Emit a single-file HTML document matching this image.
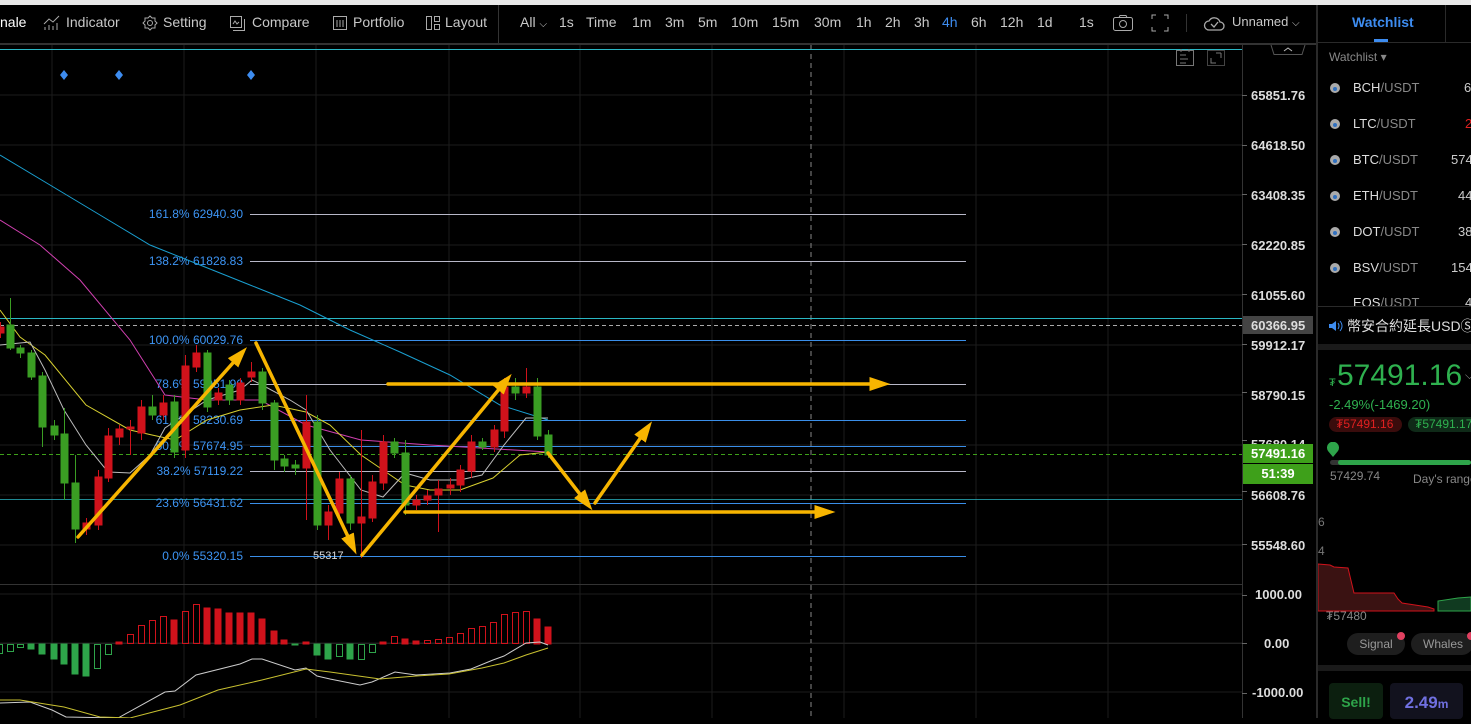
<!DOCTYPE html>
<html><head><meta charset="utf-8">
<style>
*{margin:0;padding:0;box-sizing:border-box}
body{width:1471px;height:718px;background:#000;overflow:hidden;position:relative;font-family:"Liberation Sans","Noto Sans CJK TC",sans-serif;color:#ccc}
.abs{position:absolute;white-space:nowrap}
.tb{top:14px;font-size:14px;color:#c8c8c8}
.wl{font-size:13px;color:#ddd;left:1353px}
.wl span{color:#888}
.pa{left:1251px;font-size:13px;font-weight:bold;color:#ddd}
</style></head><body>
<div class="abs" style="left:0;top:0;width:1471px;height:5px;background:#e8e8e8"></div>
<div class="abs" style="left:0;top:43px;width:1316px;height:2px;background:#333"></div>
<div class="abs" style="left:498px;top:5px;width:1px;height:38px;background:#333"></div>
<div class="abs" style="left:1186px;top:14px;width:1px;height:18px;background:#333"></div>
<div class="abs tb" style="left:0;color:#fff">nale</div>
<svg class="abs" style="left:43px;top:15px" width="18" height="16" viewBox="0 0 18 16" fill="none" stroke="#aaa" stroke-width="1"><path d="M1 9l5-5 4 3 6-6M2 15v-3M6 15v-5M10 15v-4M14 15v-7"/></svg>
<div class="abs tb" style="left:66px">Indicator</div>
<svg class="abs" style="left:142px;top:15px" width="16" height="16" viewBox="0 0 16 16" fill="none" stroke="#aaa"><circle cx="8" cy="8" r="2.5"/><path d="M8 1l2 2h3v3l2 2-2 2v3h-3l-2 2-2-2H3v-3L1 8l2-2V3h3z"/></svg>
<div class="abs tb" style="left:163px">Setting</div>
<svg class="abs" style="left:229px;top:15px" width="16" height="16" fill="none" stroke="#aaa"><rect x="1.5" y="1.5" width="11" height="11"/><path d="M4 15.5h11.5V4M4 9l2-3 2 3 2-2"/></svg>
<div class="abs tb" style="left:252px">Compare</div>
<svg class="abs" style="left:332px;top:15px" width="16" height="16" fill="none" stroke="#aaa"><rect x="1.5" y="1.5" width="13" height="13"/><path d="M5 5v7M8 5v7M11 5v7"/></svg>
<div class="abs tb" style="left:353px">Portfolio</div>
<svg class="abs" style="left:425px;top:15px" width="16" height="16" fill="none" stroke="#aaa"><rect x="1.5" y="1.5" width="5" height="13"/><rect x="9.5" y="1.5" width="5" height="5"/><rect x="9.5" y="9.5" width="5" height="5"/></svg>
<div class="abs tb" style="left:445px">Layout</div>
<div class="abs tb" style="left:520px">All <span style="font-size:10px">⌵</span></div>
<div class="abs tb" style="left:559px">1s</div>
<div class="abs tb" style="left:586px">Time</div>
<div class="abs tb" style="left:632px">1m</div>
<div class="abs tb" style="left:665px">3m</div>
<div class="abs tb" style="left:698px">5m</div>
<div class="abs tb" style="left:731px">10m</div>
<div class="abs tb" style="left:772px">15m</div>
<div class="abs tb" style="left:814px">30m</div>
<div class="abs tb" style="left:856px">1h</div>
<div class="abs tb" style="left:885px">2h</div>
<div class="abs tb" style="left:914px">3h</div>
<div class="abs tb" style="left:942px;color:#3d8cf0">4h</div>
<div class="abs tb" style="left:971px">6h</div>
<div class="abs tb" style="left:1000px">12h</div>
<div class="abs tb" style="left:1037px">1d</div>
<div class="abs tb" style="left:1079px">1s</div>
<svg class="abs" style="left:1112px;top:13px" width="22" height="20" fill="none" stroke="#aaa"><rect x="1.5" y="4.5" width="19" height="13" rx="2"/><circle cx="11" cy="11" r="3.5"/><path d="M7 4.5l1-2h6l1 2"/></svg>
<svg class="abs" style="left:1151px;top:14px" width="18" height="18" fill="none" stroke="#aaa"><path d="M1 5V1h4M13 1h4v4M17 13v4h-4M5 17H1v-4"/></svg>
<svg class="abs" style="left:1203px;top:13px" width="22" height="20" fill="none" stroke="#aaa" stroke-width="1.3"><path d="M6 17h11a4 4 0 000-8 6 6 0 00-11-1 4.5 4.5 0 000 9z"/><path d="M8 11l3 3 4-5"/></svg>
<div class="abs tb" style="left:1232px;font-size:13px">Unnamed <span style="font-size:10px">⌵</span></div>

<svg class="abs" style="left:0;top:45px" width="1316" height="673">
<g transform="translate(0,-45)">
<g stroke="#1c1c1c" stroke-width="1">
<path d="M52 45V718M184 45V718M316 45V718M449 45V718M580 45V718M712 45V718M844 45V718M976 45V718M1108 45V718"/>
<path d="M0 95H1242M0 145H1242M0 195H1242M0 245H1242M0 295H1242M0 345H1242M0 395H1242M0 445H1242M0 495H1242M0 545H1242M0 594H1242M0 643H1242M0 692H1242"/>
</g>
<path d="M0 584.5H1242" stroke="#333"/>
<path d="M811 45V718" stroke="#888" stroke-dasharray="5,4"/>
<path d="M0 49.5H1242" stroke="#2ab7c4"/>
<path d="M0 318.5H1242" stroke="#2ab7c4"/>
<path d="M0 499.5H1242" stroke="#2ab7c4" stroke-width=".8"/>
<path d="M0 325.5H1242" stroke="#aaa" stroke-dasharray="4,3"/>
<path d="M0 454.5H1242" stroke="#3ea01a" stroke-dasharray="4,3"/>
<g stroke="#3a8ee8" stroke-width="1">
<path d="M250 340.5H966M250 420.5H966M250 446.5H966M250 503.5H966M250 556.5H966"/>
</g>
<g stroke="#b8b8c8" stroke-width="1">
<path d="M250 214.5H966M250 261.5H966M250 384.5H966M250 471.5H966"/>
</g>
<g font-size="12" fill="#3d95f5" text-anchor="end" font-family="Liberation Sans">
<text x="243" y="218">161.8% 62940.30</text>
<text x="243" y="265">138.2% 61828.83</text>
<text x="243" y="344">100.0% 60029.76</text>
<text x="243" y="388">78.6% 59051.90</text>
<text x="243" y="424">61.8% 58230.69</text>
<text x="243" y="450">50.0% 57674.95</text>
<text x="243" y="475">38.2% 57119.22</text>
<text x="243" y="507">23.6% 56431.62</text>
<text x="243" y="560">0.0% 55320.15</text>
</g>
<text x="313" y="559" font-size="11" fill="#ddd">55317</text>
<g fill="#3d8cf0"><path d="M64 70l4 5-4 5-4-5z"/><path d="M119 70l4 5-4 5-4-5z"/><path d="M251 70l4 5-4 5-4-5z"/></g>
<g fill="none" stroke-width="1">
<polyline stroke="#1a9fd0" points="0,155 50,185 100,215 150,245 200,265 250,285 300,305 350,330 400,352 450,375 500,405 548,420"/>
<polyline stroke="#d040b0" points="0,220 40,245 80,280 130,340 165,395 207,400 260,400 306,425 361,440 430,445 480,448 548,452"/>
<polyline stroke="#d8d030" points="0,310 20,337 45,355 86,405 130,430 152,435 175,440 207,420 240,410 273,405 306,412 330,425 361,455 383,470 405,485 430,490 460,490 493,478 520,455 548,452"/>
<polyline stroke="#bbb" points="0,345 20,343 30,342 45,370 64,410 86,445 108,472 130,473 150,455 165,428 207,400 240,390 252,380 262,385 290,400 306,410 330,450 361,490 383,497 405,473 430,480 460,480 482,475 504,445 526,418 548,418"/>
</g>
<g stroke-width="1">
<g fill="#d0121b" stroke="#d0121b">
<path d="M0.5 322V338M86.5 518V535M98.5 470V530M108.5 428V482M119.5 425V445M130.5 420V455M141.5 400V440M163.5 395V420M185.5 355V458M196.5 345V372M218.5 388V405M240.5 378V405M251.5 362V382M306.5 395V520M328.5 505V540M339.5 472V520M361.5 430V558M372.5 475V522M383.5 435V490M416.5 495V510M427.5 490V505M438.5 480V532M450.5 478V495M460.5 465V492M471.5 435V478M494.5 425V452M504.5 378V438M526.5 368V398"/>
<rect x="-2" y="327" width="6" height="6"/><rect x="83" y="523" width="7" height="6"/><rect x="95" y="477" width="7" height="48"/><rect x="105" y="436" width="7" height="42"/><rect x="116" y="429" width="7" height="8"/><rect x="127" y="427" width="7" height="2"/><rect x="138" y="407" width="7" height="26"/><rect x="160" y="403" width="7" height="12"/><rect x="182" y="366" width="7" height="84"/><rect x="193" y="353" width="7" height="14"/><rect x="215" y="393" width="7" height="7"/><rect x="237" y="383" width="7" height="17"/><rect x="248" y="372" width="7" height="5"/><rect x="303" y="422" width="7" height="46"/><rect x="325" y="512" width="7" height="13"/><rect x="336" y="479" width="7" height="34"/><rect x="358" y="517" width="7" height="6"/><rect x="369" y="482" width="7" height="36"/><rect x="380" y="442" width="7" height="41"/><rect x="413" y="500" width="7" height="5"/><rect x="424" y="496" width="7" height="4"/><rect x="435" y="489" width="7" height="6"/><rect x="447" y="485" width="7" height="3"/><rect x="457" y="470" width="7" height="15"/><rect x="468" y="442" width="7" height="29"/><rect x="491" y="430" width="7" height="17"/><rect x="501" y="387" width="7" height="44"/><rect x="523" y="387" width="7" height="6"/>
</g>
<g fill="#3a9d23" stroke="#3a9d23">
<path d="M10.5 298V350M20.5 345V358M31.5 350V380M42.5 372V447M54.5 420V440M64.5 408V500M75.5 455V543M152.5 395V420M174.5 395V458M207.5 350V412M229.5 380V405M262.5 368V410M274.5 400V470M284.5 455V472M295.5 460V475M317.5 415V530M350.5 475V530M394.5 438V458M405.5 440V515M482.5 438V450M515.5 378V400M537.5 378V440M548.5 430V458"/>
<rect x="7" y="325" width="7" height="23"/><rect x="17" y="348" width="7" height="5"/><rect x="28" y="353" width="7" height="24"/><rect x="39" y="376" width="7" height="51"/><rect x="51" y="426" width="7" height="9"/><rect x="61" y="434" width="7" height="49"/><rect x="72" y="483" width="7" height="46"/><rect x="149" y="407" width="7" height="8"/><rect x="171" y="402" width="7" height="50"/><rect x="204" y="353" width="7" height="54"/><rect x="226" y="385" width="7" height="15"/><rect x="259" y="372" width="7" height="31"/><rect x="271" y="403" width="7" height="57"/><rect x="281" y="459" width="7" height="7"/><rect x="292" y="465" width="7" height="3"/><rect x="314" y="422" width="7" height="103"/><rect x="347" y="479" width="7" height="44"/><rect x="391" y="442" width="7" height="11"/><rect x="402" y="453" width="7" height="52"/><rect x="479" y="442" width="7" height="5"/><rect x="512" y="387" width="7" height="6"/><rect x="534" y="387" width="7" height="49"/><rect x="545" y="435" width="7" height="20"/>
</g>
</g>
<defs><marker id="ah" markerWidth="6" markerHeight="4" refX="3" refY="2" orient="auto" markerUnits="strokeWidth"><path d="M0 0L6 2 0 4z" fill="#f7b500"/></marker></defs>
<g stroke="#f7b500" stroke-width="3.5" fill="none" marker-end="url(#ah)" stroke-linecap="round">
<path d="M78 537L240 355"/>
<path d="M256 343L352 545"/>
<path d="M362 555L505 382"/>
<path d="M388 384L880 384"/>
<path d="M405 512L825 512"/>
<path d="M548 453L586 502"/>
<path d="M595 503L646 430"/>
</g>
<path d="M0 643.5H1242" stroke="#222"/>
<g stroke-width="1">
<g fill="#d0121b" stroke="#d0121b">
<rect x="116" y="642" width="6" height="2"/><rect x="171" y="620" width="6" height="24"/><rect x="204" y="608" width="6" height="36"/><rect x="215" y="609" width="6" height="35"/><rect x="226" y="613" width="6" height="31"/><rect x="237" y="613" width="6" height="31"/><rect x="248" y="613" width="6" height="31"/><rect x="259" y="619" width="6" height="25"/><rect x="271" y="631" width="6" height="13"/><rect x="281" y="640" width="6" height="4"/><rect x="303" y="642" width="6" height="2"/><rect x="380" y="642" width="6" height="2"/><rect x="402" y="639" width="6" height="5"/><rect x="413" y="641" width="6" height="3"/><rect x="534" y="619" width="6" height="25"/><rect x="545" y="627" width="6" height="17"/>
</g>
<g fill="none" stroke="#d0121b">
<rect x="127.5" y="634.5" width="6" height="9"/><rect x="138.5" y="625.5" width="6" height="18"/><rect x="149.5" y="620.5" width="6" height="23"/><rect x="160.5" y="616.5" width="6" height="27"/><rect x="182.5" y="611.5" width="6" height="32"/><rect x="193.5" y="604.5" width="6" height="39"/><rect x="391.5" y="636.5" width="6" height="7"/><rect x="424.5" y="640.5" width="6" height="3"/><rect x="435.5" y="639.5" width="6" height="4"/><rect x="446.5" y="637.5" width="6" height="6"/><rect x="457.5" y="633.5" width="6" height="10"/><rect x="468.5" y="628.5" width="6" height="15"/><rect x="479.5" y="626.5" width="6" height="17"/><rect x="490.5" y="622.5" width="6" height="21"/><rect x="501.5" y="614.5" width="6" height="29"/><rect x="512.5" y="612.5" width="6" height="31"/><rect x="523.5" y="611.5" width="6" height="32"/>
</g>
<g fill="#2ea44a" stroke="#2ea44a">
<rect x="28" y="644" width="6" height="5"/><rect x="39" y="644" width="6" height="10"/><rect x="51" y="644" width="6" height="15"/><rect x="61" y="644" width="6" height="20"/><rect x="72" y="644" width="6" height="30"/><rect x="83" y="644" width="6" height="32"/><rect x="292" y="644" width="6" height="1"/><rect x="314" y="644" width="6" height="11"/><rect x="325" y="644" width="6" height="15"/><rect x="347" y="644" width="6" height="15"/>
</g>
<g fill="none" stroke="#2ea44a">
<rect x="-3.5" y="644.5" width="6" height="9"/><rect x="7.5" y="644.5" width="6" height="7"/><rect x="17.5" y="644.5" width="6" height="3"/><rect x="94.5" y="644.5" width="6" height="24"/><rect x="105.5" y="644.5" width="6" height="10"/><rect x="336.5" y="644.5" width="6" height="12"/><rect x="358.5" y="644.5" width="6" height="15"/><rect x="369.5" y="644.5" width="6" height="8"/>
</g>
</g>
<polyline fill="none" stroke="#ccc" points="0,703 30,702 52,710 66,717 118,718 165,692 175,691 196,675 240,664 252,659 262,659 295,670 306,668 317,676 330,679 360,685 372,682 395,672 416,675 450,673 471,669 493,660 504,656 526,643 540,642 548,645"/>
<polyline fill="none" stroke="#c8c030" points="0,700 20,700 64,707 100,717 130,718 180,705 218,690 262,680 306,669 330,672 380,679 416,676 449,674 482,668 504,663 526,655 548,648"/>
<g fill="none" stroke="#777"><rect x="1176.5" y="50.5" width="17" height="15"/><path d="M1180 55h6M1180 59h8M1180 63h6M1181 49v3M1189 49v3"/><rect x="1207.5" y="50.5" width="17" height="15" stroke="#444"/><path d="M1211 58v5h5M1221 53h-5M1221 53v5"/></g>
</g>
</svg>

<div class="abs" style="left:1242px;top:45px;width:1px;height:673px;background:#333"></div>
<svg class="abs" style="left:1270px;top:45px" width="36" height="11" fill="none" stroke="#555"><path d="M1 0l3 9.5h28l3-9.5"/><path d="M14 6l4-3 4 3" stroke="#bbb"/></svg>
<svg class="abs" style="left:1242px;top:45px" width="6" height="673" stroke="#666"><path d="M0 50.5h5M0 100.5h5M0 149.5h5M0 199.5h5M0 249.5h5M0 299.5h5M0 347.5h5M0 395.5h5M0 446.5h5M0 499.5h5M0 550.5h5M0 598.5h5M0 648.5h5"/></svg>
<div class="abs pa" style="top:88px">65851.76</div>
<div class="abs pa" style="top:138px">64618.50</div>
<div class="abs pa" style="top:188px">63408.35</div>
<div class="abs pa" style="top:238px">62220.85</div>
<div class="abs pa" style="top:288px">61055.60</div>
<div class="abs" style="left:1243px;top:316px;width:70px;height:18px;background:#444"></div>
<div class="abs pa" style="top:318px">60366.95</div>
<div class="abs pa" style="top:338px">59912.17</div>
<div class="abs pa" style="top:388px">58790.15</div>
<div class="abs pa" style="top:437px">57680.14</div>
<div class="abs" style="left:1243px;top:444px;width:70px;height:19px;background:#3ea01a"></div>
<div class="abs pa" style="top:446px;color:#fff">57491.16</div>
<div class="abs" style="left:1243px;top:464px;width:70px;height:20px;background:#3ea01a;font-size:13px;font-weight:bold;color:#fff;text-align:center;line-height:20px">51:39</div>
<div class="abs pa" style="top:488px">56608.76</div>
<div class="abs pa" style="top:538px">55548.60</div>
<div class="abs pa" style="top:587px;left:1255px">1000.00</div>
<div class="abs pa" style="top:636px;left:1264px">0.00</div>
<div class="abs pa" style="top:685px;left:1252px">-1000.00</div>

<div class="abs" style="left:1316px;top:5px;width:2px;height:713px;background:#2a2a2a"></div>
<div class="abs" style="left:1318px;top:42px;width:153px;height:1px;background:#2a2a2a"></div>
<div class="abs" style="left:1445px;top:5px;width:1px;height:37px;background:#2a2a2a"></div>
<div class="abs" style="left:1352px;top:14px;font-size:14px;font-weight:bold;color:#3d8cf0">Watchlist</div>
<div class="abs" style="left:1374px;top:39px;width:14px;height:3px;background:#3d8cf0"></div>
<div class="abs" style="left:1329px;top:50px;font-size:12px;color:#888">Watchlist ▾</div>
<div class="abs wl" style="top:80px">BCH<span>/USDT</span></div><div class="abs" style="left:1464px;top:80px;font-size:13px">6</div>
<div class="abs wl" style="top:116px">LTC<span>/USDT</span></div><div class="abs" style="left:1465px;top:116px;font-size:13px;color:#e02020">2</div>
<div class="abs wl" style="top:152px">BTC<span>/USDT</span></div><div class="abs" style="left:1451px;top:152px;font-size:13px">574</div>
<div class="abs wl" style="top:188px">ETH<span>/USDT</span></div><div class="abs" style="left:1458px;top:188px;font-size:13px">44</div>
<div class="abs wl" style="top:224px">DOT<span>/USDT</span></div><div class="abs" style="left:1458px;top:224px;font-size:13px">38</div>
<div class="abs wl" style="top:260px">BSV<span>/USDT</span></div><div class="abs" style="left:1451px;top:260px;font-size:13px">154</div>
<div class="abs" style="left:1318px;top:295px;width:153px;height:11px;overflow:hidden"><div class="abs wl" style="top:0;left:35px">EOS<span>/USDT</span></div><div class="abs" style="left:147px;top:0;font-size:13px">4</div></div>
<svg class="abs" style="left:1329px;top:82px" width="12" height="230"><g fill="#aaa"><circle cx="6" cy="6" r="5"/><circle cx="6" cy="42" r="5"/><circle cx="6" cy="78" r="5"/><circle cx="6" cy="114" r="5"/><circle cx="6" cy="150" r="5"/><circle cx="6" cy="186" r="5"/></g><g fill="#3070c0"><circle cx="6" cy="7" r="2"/><circle cx="6" cy="43" r="2"/><circle cx="6" cy="79" r="2"/><circle cx="6" cy="115" r="2"/><circle cx="6" cy="151" r="2"/><circle cx="6" cy="187" r="2"/></g></svg>
<div class="abs" style="left:1318px;top:306px;width:153px;height:1px;background:#2a2a2a"></div>
<svg class="abs" style="left:1328px;top:319px" width="16" height="14"><path d="M1 5h3l4-3v10L4 9H1z" fill="#3d8cf0"/><path d="M10 4q2 3 0 6M12 2q4 5 0 10" stroke="#3d8cf0" fill="none"/></svg>
<div class="abs" style="left:1347px;top:316px;font-size:14px;color:#ddd">幣安合約延長USDⓈ-M</div>
<div class="abs" style="left:1318px;top:344px;width:153px;height:6px;background:#1a1a1a"></div>
<div class="abs" style="left:1329px;top:377px;font-size:11px;color:#2fb14f">₮</div>
<div class="abs" style="left:1337px;top:359px;font-size:30px;color:#2fb14f">57491.16</div>
<div class="abs" style="left:1465px;top:368px;font-size:12px;color:#888">⌵</div>
<div class="abs" style="left:1329px;top:397px;font-size:13px;color:#2fb14f">-2.49%(-1469.20)</div>
<div class="abs" style="left:1329px;top:417px;width:73px;height:15px;border-radius:8px;background:#3a0c0c;font-size:12px;color:#e02020;line-height:15px;padding-left:7px">₮57491.16</div>
<div class="abs" style="left:1408px;top:417px;width:70px;height:15px;border-radius:8px;background:#0f2a18;font-size:12px;color:#2fb14f;line-height:15px;padding-left:7px">₮57491.17</div>
<svg class="abs" style="left:1326px;top:442px" width="14" height="16"><path d="M7 15L2 9a6 6 0 1110 0z" fill="#2ea44a"/></svg>
<div class="abs" style="left:1330px;top:460px;width:141px;height:5px;border-radius:3px;background:#333"></div>
<div class="abs" style="left:1338px;top:460px;width:133px;height:5px;border-radius:3px;background:#2ea44a"></div>
<div class="abs" style="left:1330px;top:469px;font-size:12px;color:#888">57429.74</div>
<div class="abs" style="left:1413px;top:472px;font-size:12px;color:#888">Day's range</div>
<div class="abs" style="left:1318px;top:515px;font-size:12px;color:#777">6</div>
<div class="abs" style="left:1318px;top:544px;font-size:12px;color:#777">4</div>
<div class="abs" style="left:1318px;top:573px;font-size:12px;color:#777">2</div>
<svg class="abs" style="left:1318px;top:560px" width="153" height="52"><path d="M0 4L12 5 16 7 30 8 36 33 76 33 80 39 84 43 110 47 116 49 116 51H0z" fill="#3a1212" stroke="#d0121b"/><path d="M120 51V41L140 38 153 37V51z" fill="#103a20" stroke="#2ea44a"/></svg>
<div class="abs" style="left:1326px;top:609px;font-size:12px;color:#888">₮57480</div>
<div class="abs" style="left:1347px;top:633px;width:58px;height:22px;border-radius:11px;background:#1e1e1e;font-size:12px;color:#999;line-height:22px;text-align:center">Signal</div>
<div class="abs" style="left:1397px;top:632px;width:8px;height:8px;border-radius:4px;background:#e04060"></div>
<div class="abs" style="left:1411px;top:633px;width:62px;height:22px;border-radius:11px;background:#1e1e1e;font-size:12px;color:#999;line-height:22px;padding-left:12px">Whales</div>
<div class="abs" style="left:1467px;top:632px;width:8px;height:8px;border-radius:4px;background:#e04060"></div>
<div class="abs" style="left:1318px;top:665px;width:153px;height:6px;background:#1a1a1a"></div>
<div class="abs" style="left:1329px;top:683px;width:54px;height:36px;border-radius:4px;background:#0c1f0f;font-size:14px;font-weight:bold;color:#2ea44a;text-align:center;line-height:38px">Sell!</div>
<div class="abs" style="left:1390px;top:683px;width:73px;height:36px;border-radius:4px;background:#12121e;font-size:17px;font-weight:bold;color:#7070e0;text-align:center;line-height:40px">2.49<span style="font-size:12px">m</span></div>
</body></html>
